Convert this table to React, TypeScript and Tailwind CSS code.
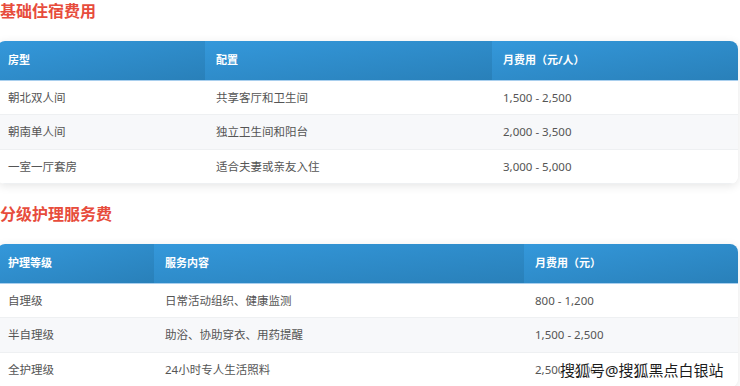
import React from "react";

type Table = {
  title: string;
  cols: { label: string; w: string }[];
  rows: string[][];
};

const tables: Table[] = [
  {
    title: "基础住宿费用",
    cols: [
      { label: "房型", w: "w-[208px]" },
      { label: "配置", w: "w-[287px]" },
      { label: "月费用（元/人）", w: "w-[246px]" },
    ],
    rows: [
      ["朝北双人间", "共享客厅和卫生间", "1,500 - 2,500"],
      ["朝南单人间", "独立卫生间和阳台", "2,000 - 3,500"],
      ["一室一厅套房", "适合夫妻或亲友入住", "3,000 - 5,000"],
    ],
  },
  {
    title: "分级护理服务费",
    cols: [
      { label: "护理等级", w: "w-[157px]" },
      { label: "服务内容", w: "w-[370px]" },
      { label: "月费用（元）", w: "w-[214px]" },
    ],
    rows: [
      ["自理级", "日常活动组织、健康监测", "800 - 1,200"],
      ["半自理级", "助浴、协助穿衣、用药提醒", "1,500 - 2,500"],
      ["全护理级", "24小时专人生活照料", "2,500 - 4,000"],
    ],
  },
];

function FeeTable({ t }: { t: Table }) {
  return (
    <div>
      <h2 className="h-[22px] leading-[22px] text-[16px] font-bold text-[#e74c3c] mb-[19px]">{t.title}</h2>
      <div className="w-[741px] -ml-[3px] rounded-[8px] overflow-hidden shadow-[0_2px_10px_rgba(0,0,0,0.1)] bg-white">
        <table className="w-full border-collapse table-fixed">
          <thead>
            <tr className="h-[39px]">
              {t.cols.map((c) => (
                <th
                  key={c.label}
                  className={`${c.w} px-[11px] text-left text-[11px] font-bold text-white bg-gradient-to-br from-[#3498db] to-[#2980b9] border-b border-[#a9cfee]`}
                >
                  {c.label}
                </th>
              ))}
            </tr>
          </thead>
          <tbody>
            {t.rows.map((r, i) => (
              <tr key={i} className={`h-[34.5px] border-b border-[#eef0f2] ${i % 2 === 1 ? "bg-[#f7f8fa]" : "bg-white"}`}>
                {r.map((cell, j) => (
                  <td key={j} className="px-[11px] text-[11.5px] text-[#555]">
                    {cell}
                  </td>
                ))}
              </tr>
            ))}
          </tbody>
        </table>
      </div>
    </div>
  );
}

export default function App() {
  return (
    <div className="relative w-[740px] h-[386px] overflow-hidden bg-white font-['Noto_Sans','Noto_Sans_CJK_SC',sans-serif]">
      <div className="flex flex-col gap-[19px]">
        {tables.map((t) => (
          <FeeTable key={t.title} t={t} />
        ))}
      </div>
      <div className="absolute left-[560px] top-[360px] text-[15px] leading-[20px] text-[#1c1c1c] [text-shadow:0_0_2px_#fff,0_0_2px_#fff,0_0_3px_#fff]">
        搜狐号@搜狐黑点白银站
      </div>
    </div>
  );
}
